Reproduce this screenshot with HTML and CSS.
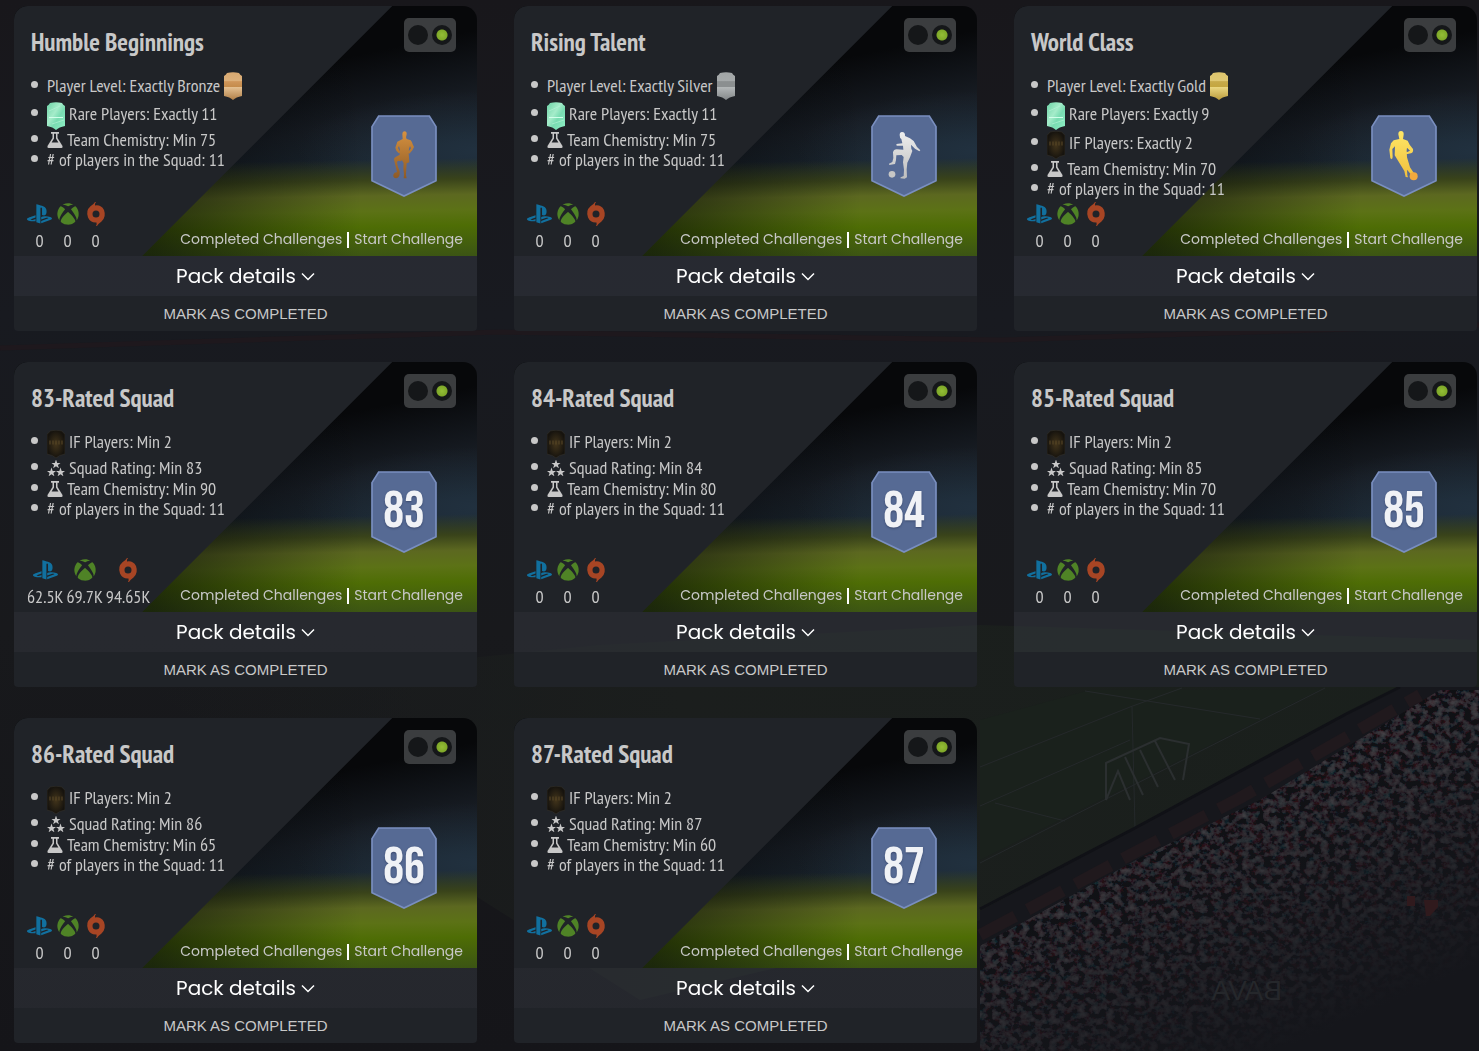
FILE: index.html
```
<!DOCTYPE html>
<html lang="en">
<head>
<meta charset="UTF-8">
<meta name="viewport" content="width=device-width, initial-scale=1">
<title>Squad Building Challenges</title>
<link rel="stylesheet" href="styles.css">
</head>
<body>

<!-- icon sprite -->
<svg class="sprite" width="0" height="0" aria-hidden="true">
    <defs>
        <linearGradient id="g-bronze" x1="0" y1="0" x2="0" y2="1"><stop offset="0" stop-color="#d8a971"/><stop offset=".3" stop-color="#dcb07a"/><stop offset=".34" stop-color="#cf965a"/><stop offset=".52" stop-color="#c58c4c"/><stop offset=".54" stop-color="#e4c091"/><stop offset="1" stop-color="#b07f48"/></linearGradient>
        <linearGradient id="g-silver" x1="0" y1="0" x2="0" y2="1"><stop offset="0" stop-color="#a1a5a6"/><stop offset=".3" stop-color="#a5a9aa"/><stop offset=".34" stop-color="#8b8f90"/><stop offset=".52" stop-color="#8b8f90"/><stop offset=".54" stop-color="#b3b7b8"/><stop offset="1" stop-color="#84888a"/></linearGradient>
        <linearGradient id="g-gold" x1="0" y1="0" x2="0" y2="1"><stop offset="0" stop-color="#ddc46c"/><stop offset=".3" stop-color="#dfc873"/><stop offset=".34" stop-color="#c7aa4a"/><stop offset=".52" stop-color="#c4a640"/><stop offset=".54" stop-color="#ead680"/><stop offset="1" stop-color="#bb9c3d"/></linearGradient>
        <linearGradient id="g-rare" x1="0" y1="0" x2="1" y2="1"><stop offset="0" stop-color="#6cd2a5"/><stop offset=".4" stop-color="#a5ecca"/><stop offset=".6" stop-color="#78dcb1"/><stop offset="1" stop-color="#8ff0c6"/></linearGradient>
        <radialGradient id="g-if"><stop offset="0" stop-color="#43351b"/><stop offset="1" stop-color="#16130e"/></radialGradient>
        <linearGradient id="g-p1" x1="0" y1="0" x2="0" y2="1"><stop offset="0" stop-color="#d6913f"/><stop offset="1" stop-color="#8d5a26"/></linearGradient>
        <linearGradient id="g-p2" x1="0" y1="0" x2="0" y2="1"><stop offset="0" stop-color="#eeeeee"/><stop offset="1" stop-color="#bdbdbd"/></linearGradient>
        <linearGradient id="g-p3" x1="0" y1="0" x2="0" y2="1"><stop offset="0" stop-color="#ffe766"/><stop offset="1" stop-color="#f0c03e"/></linearGradient>
        <path id="card-shape" d="M0 4Q2 3 3 1Q9-.6 15 1Q16 3 18 4V24Q12 25 9 28Q6 25 0 24Z"/>
    </defs>
    <symbol id="bronze" viewBox="0 0 18 28"><use href="#card-shape" fill="url(#g-bronze)"/></symbol>
    <symbol id="silver" viewBox="0 0 18 28"><use href="#card-shape" fill="url(#g-silver)"/></symbol>
    <symbol id="gold" viewBox="0 0 18 28"><use href="#card-shape" fill="url(#g-gold)"/></symbol>
    <symbol id="rare" viewBox="0 0 18 28"><use href="#card-shape" fill="url(#g-rare)"/><path d="M2 15.500H16" stroke="#d0ffea"/><path d="M2 9L13 4M5 22L17 18" stroke="#b9f5da" opacity=".6"/></symbol>
    <symbol id="if" viewBox="0 0 18 28"><use href="#card-shape" fill="url(#g-if)" stroke="#33302a" stroke-width=".6"/><path d="M2 12.500h14" stroke="#5b4927" stroke-width="4" stroke-dasharray="2 1" opacity=".5"/></symbol>
    <symbol id="flask" viewBox="0 0 16 16"><path fill="#c8c8c8" fill-rule="evenodd" d="M4 0H12V1.800H10.500V6L15.500 14Q16 16 14.500 16H1.500Q0 16 .5 14L5.500 6V1.800H4ZM7 1.800V6.500L4.600 10.500H11.400L9 6.500V1.800Z"/></symbol>
    <symbol id="stars" viewBox="0 0 18 16"><g fill="#c8c8c8"><path id="star" d="M9-.5L10.200 2.900H13.500L10.900 5L11.900 8.300L9 6.300L6.100 8.300L7.100 5L4.500 2.900H7.800Z"/><use href="#star" x="-4.500" y="8"/><use href="#star" x="4.500" y="8"/></g></symbol>
    <symbol id="ps" viewBox="0 0 576 512"><path fill="#11709f" d="M570.9 372.3c-11.3 14.2-38.8 24.3-38.8 24.3L327 470.2v-54.300l150.900-53.800c17.100-6.100 19.800-14.800 5.800-19.400-13.900-4.600-39.100-3.300-56.200 2.900L327 381.100v-56.400c23.200-7.800 47.100-13.600 75.700-16.800 40.900-4.500 90.900.6 130.200 15.500 44.200 14 49.200 34.700 38 48.900zm-224.400-92.500v-139c0-16.300-3-31.300-18.300-35.600-11.700-3.800-19 7.100-19 23.400v347.900l-93.800-29.800V32c39.900 7.400 98 24.900 129.200 35.400C424.100 94.700 451 128.700 451 205.200c0 74.500-46 102.800-104.500 74.600zM43.200 410.200c-45.400-12.800-53-39.500-32.300-54.800 19.100-14.200 51.700-24.900 51.700-24.900l134.500-47.800v54.500l-96.800 34.600c-17.100 6.100-19.700 14.800-5.800 19.400 13.900 4.600 39.100 3.300 56.200-2.900l46.400-16.900v48.800c-51.600 9.300-101.400 7.300-153.900-10z"/></symbol>
    <symbol id="xbox" viewBox="0 0 512 512"><path fill="#4f8326" d="M369.900 318.200c44.300 54.300 64.700 98.800 54.400 118.700-7.900 15.100-56.700 44.600-92.600 55.900-29.600 9.300-68.400 13.300-100.400 10.200-38.200-3.700-76.900-17.400-110.100-39C93.300 445.800 87 438.300 87 423.400c0-29.900 32.900-82.300 89.200-142.100 32-33.900 76.500-73.700 81.400-72.600 9.400 2.100 84.300 75.100 112.300 109.500zM188.600 143.800c-29.700-26.900-58.100-53.900-86.400-63.400-15.200-5.100-16.300-4.800-28.700 8.100-29.200 30.400-53.500 79.700-60.300 122.400-5.400 34.200-6.100 43.800-4.200 60.500 5.600 50.500 17.300 85.400 40.500 120.900 9.500 14.600 12.100 17.300 9.300 9.900-4.200-11-.3-37.500 9.500-64 14.300-39 53.900-112.900 120.300-194.400zm311.600 63.500C483.300 127.300 432.700 77 425.600 77c-7.300 0-24.200 6.500-36 13.900-23.300 14.500-41 31.400-64.300 52.800C367.700 197 427.500 283.100 448.200 346c6.800 20.700 9.700 41.100 7.400 52.300-1.700 8.500-1.700 8.500 1.400 4.600 6.100-7.700 19.900-31.300 25.400-43.500 7.400-16.200 15-40.200 18.600-58.700 4.300-22.500 3.900-70.800-.8-93.400zM141.300 43C189 40.500 251 77.500 255.600 78.400c.7.1 10.400-4.200 21.600-9.700 63.900-31.100 94-25.800 107.400-25.200-63.900-39.300-152.700-50-233.900-11.700-23.400 11.100-24 11.900-9.400 11.200z"/></symbol>
    <symbol id="origin" viewBox="0 0 18 24"><path fill="#a74524" fill-rule="evenodd" d="M9 0Q7.500 1.500 8 3.500Q14 2.500 17 8Q19.500 15 14.500 19.500Q11 22 10 24H9Q10 22.500 9.500 20.500Q3.500 21 1 15.500Q-1.500 8.500 3.500 4.200Q7 2 8 0ZM9 8.500A3.500 3.500 0 1 0 9 15.500A3.500 3.500 0 1 0 9 8.500Z"/></symbol>
    <symbol id="chevron" viewBox="0 0 14 9"><path fill="none" stroke="#fff" stroke-width="1.500" d="M1 1.500L7 7.500L13 1.500"/></symbol>
    <symbol id="shield" viewBox="0 0 198 246"><path fill="#566a94" stroke="#7a8fc0" stroke-width="5" d="M23 3H175L195 35V197L99 243L3 197V35Z"/></symbol>
    <symbol id="player-bronze" viewBox="0 0 198 246"><path fill="url(#g-p1)" d="M100 49Q108 49 107 58L105 67L107 72L119 76Q123 80 125 88L129 96L124 106L115 116L111 112L120 100L117 93L114 101L113 115L115 142L107 145L106 160L105 180L107 190H98L99 178L97 160L98 145L93 136L88 139L83 137L78 140L80 153L86 169Q88 188 76 190Q65 189 67 179Q70 171 78 172L76 163L70 138Q67 129 74 126L86 119L85 112L87 105L84 93L81 99L87 110L83 115L76 107L73 98L79 80L95 72L94 57Q94 49 100 49Z"/></symbol>
    <symbol id="player-silver" viewBox="0 0 198 246"><path fill="url(#g-p2)" d="M93 51Q103 51 102 63L117 70L128 78L138 96L148 106L145 109L132 101L120 89L121 101L124 108L117 127L109 143L107 163L108 187L101 191L88 190L89 187L98 183L99 164L96 142L98 126L92 120L76 121L75 135L72 147L55 150L54 146L64 141L67 129L66 112Q68 103 77 103L97 104L96 92L77 92L76 87L94 85L91 72Q86 69 86 60Q86 51 93 51Z"/><circle cx="63" cy="178" r="10" fill="#c6c6c6"/></symbol>
    <symbol id="player-gold" viewBox="0 0 198 246"><path fill="url(#g-p3)" d="M90 48Q99 48 98 59L96 72L110 77L116 89L126 102Q128 112 120 115L106 118L104 113L117 107L108 98L107 106L108 127L117 157L128 173L122 181L108 164L109 181L111 187L104 186L100 168L83 140L71 121L72 94L64 102L65 126L63 133L58 130L55 104L60 85L68 76L85 72L82 58Q82 48 90 48Z"/><circle cx="128" cy="184" r="12" fill="#f1a93d"/></symbol>
</svg>

<!-- stadium backdrop -->
<svg class="stadium" viewBox="0 0 1479 1051" preserveAspectRatio="xMidYMid slice" aria-hidden="true">
    <defs>
        <filter id="crowd" x="0" y="0" width="100%" height="100%">
            <feTurbulence type="fractalNoise" baseFrequency=".14 .16" numOctaves="3" seed="8"/>
            <feColorMatrix values=".7 .7 0 0 -.62  .35 .9 0 0 -.58  .35 .9 0 0 -.56  0 0 0 0 1"/>
            <feComposite in2="SourceGraphic" operator="in"/>
        </filter>
        <linearGradient id="sky" x1="0" y1="0" x2="0" y2="1"><stop offset="0" stop-color="#18171b"/><stop offset=".3" stop-color="#181a20"/><stop offset=".6" stop-color="#18191c"/><stop offset="1" stop-color="#151519"/></linearGradient>
        <linearGradient id="grass" x1="0" y1="0" x2="1" y2="0"><stop offset="0" stop-color="#1b1e1d" stop-opacity="0"/><stop offset=".4" stop-color="#1b1e1d"/><stop offset="1" stop-color="#1a201c"/></linearGradient>
        <linearGradient id="shade" x1="0" y1="0" x2=".6" y2="1"><stop offset="0" stop-color="#17191e" stop-opacity="0"/><stop offset="1" stop-color="#15161b"/></linearGradient>
    </defs>
    <rect width="1479" height="1051" fill="url(#sky)"/>
    <path d="M0 348L500 332L1000 340L1479 325" stroke="#1e181d" stroke-width="5" fill="none"/>
    <path d="M150 690L600 645L980 625L1479 640V690L980 920L640 1000Z" fill="url(#grass)"/>
    <path d="M980 720L1090 690H1320L980 860Z" fill="#1a211c"/>
    <g fill="none" stroke="#25292b">
        <path d="M980 767L1130 707L1182 688M980 806L1130 740M995 803L1065 821M980 863L1325 688M1085 691L1260 719M1132 707L1135 828"/>
        <path d="M1106 800V763L1160 738L1189 744L1183 780M1106 800L1118 771L1130 800M1125 757L1143 795M1140 750L1158 787M1155 741L1175 780" stroke="#2b2f30" stroke-width="2"/>
    </g>
    <path d="M980 911L1135 829L1346 715L1400 687H1479V1051H980Z" fill="#16171c"/>
    <path d="M980 909L1135 828L1346 714L1400 687" stroke="#101116" stroke-width="3" fill="none"/>
    <path d="M980 946L1140 858L1260 800L1440 690H1479V1051H980Z" filter="url(#crowd)" opacity=".5"/>
    <path d="M980 935L1130 855L1240 798L1420 695" stroke="#20191d" stroke-width="12" stroke-dasharray="40 14" fill="none"/>
    <path d="M980 946L1140 858L1260 800L1440 690H1479V1051H980Z" fill="url(#shade)"/>
    <g fill="#301a1d"><path d="M1407 896h8v10h-8zM1424 900h14v7l-8 9h-4z"/></g>
    <text x="-1282" y="1000" transform="scale(-1 1)" class="banner">BAVA</text>
</svg>

<main class="challenges">

    <article class="challenge">
        <div class="challenge-info">
            <header class="challenge-header">
                <h2>Humble Beginnings</h2>
                <span class="lights"><i></i><i class="on"></i></span>
            </header>
            <div class="challenge-body">
                <ul class="requirements">
                    <li class="level">Player Level: Exactly Bronze <svg class="card-icon"><use href="#bronze"/></svg></li>
                    <li class="rare"><svg class="card-icon"><use href="#rare"/></svg> Rare Players: Exactly 11</li>
                    <li class="chem"><svg class="flask"><use href="#flask"/></svg> Team Chemistry: Min 75</li>
                    <li># of players in the Squad: 11</li>
                </ul>
                <div class="badge"><svg><use href="#shield"/><use href="#player-bronze"/></svg></div>
            </div>
            <footer class="challenge-footer">
                <ul class="prices">
                    <li><svg class="ps"><use href="#ps"/></svg>0</li>
                    <li><svg><use href="#xbox"/></svg>0</li>
                    <li><svg><use href="#origin"/></svg>0</li>
                </ul>
                <nav class="links"><a href="#">Completed Challenges</a><a href="#">Start Challenge</a></nav>
            </footer>
        </div>
        <button class="pack-button" type="button">Pack details <svg><use href="#chevron"/></svg></button>
        <button class="mark-button" type="button">MARK AS COMPLETED</button>
    </article>

    <article class="challenge">
        <div class="challenge-info">
            <header class="challenge-header">
                <h2>Rising Talent</h2>
                <span class="lights"><i></i><i class="on"></i></span>
            </header>
            <div class="challenge-body">
                <ul class="requirements">
                    <li class="level">Player Level: Exactly Silver <svg class="card-icon"><use href="#silver"/></svg></li>
                    <li class="rare"><svg class="card-icon"><use href="#rare"/></svg> Rare Players: Exactly 11</li>
                    <li class="chem"><svg class="flask"><use href="#flask"/></svg> Team Chemistry: Min 75</li>
                    <li># of players in the Squad: 11</li>
                </ul>
                <div class="badge"><svg><use href="#shield"/><use href="#player-silver"/></svg></div>
            </div>
            <footer class="challenge-footer">
                <ul class="prices">
                    <li><svg class="ps"><use href="#ps"/></svg>0</li>
                    <li><svg><use href="#xbox"/></svg>0</li>
                    <li><svg><use href="#origin"/></svg>0</li>
                </ul>
                <nav class="links"><a href="#">Completed Challenges</a><a href="#">Start Challenge</a></nav>
            </footer>
        </div>
        <button class="pack-button" type="button">Pack details <svg><use href="#chevron"/></svg></button>
        <button class="mark-button" type="button">MARK AS COMPLETED</button>
    </article>

    <article class="challenge">
        <div class="challenge-info">
            <header class="challenge-header">
                <h2>World Class</h2>
                <span class="lights"><i></i><i class="on"></i></span>
            </header>
            <div class="challenge-body">
                <ul class="requirements">
                    <li class="level">Player Level: Exactly Gold <svg class="card-icon"><use href="#gold"/></svg></li>
                    <li class="rare"><svg class="card-icon"><use href="#rare"/></svg> Rare Players: Exactly 9</li>
                    <li class="rare"><svg class="card-icon"><use href="#if"/></svg> IF Players: Exactly 2</li>
                    <li class="chem"><svg class="flask"><use href="#flask"/></svg> Team Chemistry: Min 70</li>
                    <li># of players in the Squad: 11</li>
                </ul>
                <div class="badge"><svg><use href="#shield"/><use href="#player-gold"/></svg></div>
            </div>
            <footer class="challenge-footer">
                <ul class="prices">
                    <li><svg class="ps"><use href="#ps"/></svg>0</li>
                    <li><svg><use href="#xbox"/></svg>0</li>
                    <li><svg><use href="#origin"/></svg>0</li>
                </ul>
                <nav class="links"><a href="#">Completed Challenges</a><a href="#">Start Challenge</a></nav>
            </footer>
        </div>
        <button class="pack-button" type="button">Pack details <svg><use href="#chevron"/></svg></button>
        <button class="mark-button" type="button">MARK AS COMPLETED</button>
    </article>

    <article class="challenge">
        <div class="challenge-info">
            <header class="challenge-header">
                <h2>83-Rated Squad</h2>
                <span class="lights"><i></i><i class="on"></i></span>
            </header>
            <div class="challenge-body">
                <ul class="requirements">
                    <li class="rare"><svg class="card-icon"><use href="#if"/></svg> IF Players: Min 2</li>
                    <li class="chem"><svg class="stars"><use href="#stars"/></svg> Squad Rating: Min 83</li>
                    <li class="chem"><svg class="flask"><use href="#flask"/></svg> Team Chemistry: Min 90</li>
                    <li># of players in the Squad: 11</li>
                </ul>
                <div class="badge"><svg><use href="#shield"/></svg><b>83</b></div>
            </div>
            <footer class="challenge-footer">
                <ul class="prices">
                    <li><svg class="ps"><use href="#ps"/></svg>62.5K</li>
                    <li><svg><use href="#xbox"/></svg>69.7K</li>
                    <li><svg><use href="#origin"/></svg>94.65K</li>
                </ul>
                <nav class="links"><a href="#">Completed Challenges</a><a href="#">Start Challenge</a></nav>
            </footer>
        </div>
        <button class="pack-button" type="button">Pack details <svg><use href="#chevron"/></svg></button>
        <button class="mark-button" type="button">MARK AS COMPLETED</button>
    </article>

    <article class="challenge">
        <div class="challenge-info">
            <header class="challenge-header">
                <h2>84-Rated Squad</h2>
                <span class="lights"><i></i><i class="on"></i></span>
            </header>
            <div class="challenge-body">
                <ul class="requirements">
                    <li class="rare"><svg class="card-icon"><use href="#if"/></svg> IF Players: Min 2</li>
                    <li class="chem"><svg class="stars"><use href="#stars"/></svg> Squad Rating: Min 84</li>
                    <li class="chem"><svg class="flask"><use href="#flask"/></svg> Team Chemistry: Min 80</li>
                    <li># of players in the Squad: 11</li>
                </ul>
                <div class="badge"><svg><use href="#shield"/></svg><b>84</b></div>
            </div>
            <footer class="challenge-footer">
                <ul class="prices">
                    <li><svg class="ps"><use href="#ps"/></svg>0</li>
                    <li><svg><use href="#xbox"/></svg>0</li>
                    <li><svg><use href="#origin"/></svg>0</li>
                </ul>
                <nav class="links"><a href="#">Completed Challenges</a><a href="#">Start Challenge</a></nav>
            </footer>
        </div>
        <button class="pack-button" type="button">Pack details <svg><use href="#chevron"/></svg></button>
        <button class="mark-button" type="button">MARK AS COMPLETED</button>
    </article>

    <article class="challenge">
        <div class="challenge-info">
            <header class="challenge-header">
                <h2>85-Rated Squad</h2>
                <span class="lights"><i></i><i class="on"></i></span>
            </header>
            <div class="challenge-body">
                <ul class="requirements">
                    <li class="rare"><svg class="card-icon"><use href="#if"/></svg> IF Players: Min 2</li>
                    <li class="chem"><svg class="stars"><use href="#stars"/></svg> Squad Rating: Min 85</li>
                    <li class="chem"><svg class="flask"><use href="#flask"/></svg> Team Chemistry: Min 70</li>
                    <li># of players in the Squad: 11</li>
                </ul>
                <div class="badge"><svg><use href="#shield"/></svg><b>85</b></div>
            </div>
            <footer class="challenge-footer">
                <ul class="prices">
                    <li><svg class="ps"><use href="#ps"/></svg>0</li>
                    <li><svg><use href="#xbox"/></svg>0</li>
                    <li><svg><use href="#origin"/></svg>0</li>
                </ul>
                <nav class="links"><a href="#">Completed Challenges</a><a href="#">Start Challenge</a></nav>
            </footer>
        </div>
        <button class="pack-button" type="button">Pack details <svg><use href="#chevron"/></svg></button>
        <button class="mark-button" type="button">MARK AS COMPLETED</button>
    </article>

    <article class="challenge">
        <div class="challenge-info">
            <header class="challenge-header">
                <h2>86-Rated Squad</h2>
                <span class="lights"><i></i><i class="on"></i></span>
            </header>
            <div class="challenge-body">
                <ul class="requirements">
                    <li class="rare"><svg class="card-icon"><use href="#if"/></svg> IF Players: Min 2</li>
                    <li class="chem"><svg class="stars"><use href="#stars"/></svg> Squad Rating: Min 86</li>
                    <li class="chem"><svg class="flask"><use href="#flask"/></svg> Team Chemistry: Min 65</li>
                    <li># of players in the Squad: 11</li>
                </ul>
                <div class="badge"><svg><use href="#shield"/></svg><b>86</b></div>
            </div>
            <footer class="challenge-footer">
                <ul class="prices">
                    <li><svg class="ps"><use href="#ps"/></svg>0</li>
                    <li><svg><use href="#xbox"/></svg>0</li>
                    <li><svg><use href="#origin"/></svg>0</li>
                </ul>
                <nav class="links"><a href="#">Completed Challenges</a><a href="#">Start Challenge</a></nav>
            </footer>
        </div>
        <button class="pack-button" type="button">Pack details <svg><use href="#chevron"/></svg></button>
        <button class="mark-button" type="button">MARK AS COMPLETED</button>
    </article>

    <article class="challenge">
        <div class="challenge-info">
            <header class="challenge-header">
                <h2>87-Rated Squad</h2>
                <span class="lights"><i></i><i class="on"></i></span>
            </header>
            <div class="challenge-body">
                <ul class="requirements">
                    <li class="rare"><svg class="card-icon"><use href="#if"/></svg> IF Players: Min 2</li>
                    <li class="chem"><svg class="stars"><use href="#stars"/></svg> Squad Rating: Min 87</li>
                    <li class="chem"><svg class="flask"><use href="#flask"/></svg> Team Chemistry: Min 60</li>
                    <li># of players in the Squad: 11</li>
                </ul>
                <div class="badge"><svg><use href="#shield"/></svg><b>87</b></div>
            </div>
            <footer class="challenge-footer">
                <ul class="prices">
                    <li><svg class="ps"><use href="#ps"/></svg>0</li>
                    <li><svg><use href="#xbox"/></svg>0</li>
                    <li><svg><use href="#origin"/></svg>0</li>
                </ul>
                <nav class="links"><a href="#">Completed Challenges</a><a href="#">Start Challenge</a></nav>
            </footer>
        </div>
        <button class="pack-button" type="button">Pack details <svg><use href="#chevron"/></svg></button>
        <button class="mark-button" type="button">MARK AS COMPLETED</button>
    </article>

</main>

</body>
</html>
```
FILE: styles.css
```
* {
    box-sizing: border-box;
}

body {
    margin: 0;
    background-color: #16161a;
    color: #c8c8c8;
    font-family: "PT Sans Narrow", "Liberation Sans Narrow", "Liberation Sans", sans-serif;
    font-size: 18px;
}

ul {
    list-style: none;
    margin: 0;
    padding: 0;
}

.sprite {
    position: absolute;
}

.stadium {
    position: fixed;
    top: 0;
    left: 0;
    width: 100%;
    height: 100%;
    z-index: -1;
}

.banner {
    fill: #25272b;
    font-family: "Liberation Sans Narrow", "Liberation Sans", sans-serif;
    font-size: 28px;
}

.challenges {
    display: grid;
    grid-template-columns: repeat(auto-fill, minmax(420px, 1fr));
    gap: 31px 37px;
    padding: 6px 2px 8px 14px;
}

.challenge {
    display: flex;
    flex-direction: column;
    border-radius: 14px 14px 4px 4px;
    overflow: hidden;
}

/* dark panel cut diagonally over the floodlit pitch */
.challenge-info {
    display: flex;
    flex-direction: column;
    min-height: 250px;
    background:
        linear-gradient(135deg, #202328 267px, transparent 268px),
        linear-gradient(to right, rgba(4, 6, 8, 0.6) 30%, transparent 75%),
        linear-gradient(179deg, transparent 62%, #39431a 70%, #5c6820 76%, #5c7216 82%, #4e6d05 88%, #3b5414 100%),
        radial-gradient(ellipse 180px 60px at 100% 58%, rgba(40, 60, 80, 0.5), transparent),
        linear-gradient(168deg, #07080a 35%, #171c23 54%, #1a252e 66%);
}

.challenge-header {
    display: flex;
    justify-content: space-between;
    align-items: flex-start;
    height: 66px;
    padding: 12px 21px 0 17px;
}

.challenge-header h2 {
    margin: 10px 0 0;
    font-size: 25px;
    line-height: 28px;
    font-weight: bold;
}

.lights {
    display: flex;
    align-items: center;
    justify-content: space-between;
    width: 52px;
    height: 34px;
    padding: 0 4px;
    border-radius: 5px;
    background-color: #3b3d3f;
}

.lights i {
    width: 20px;
    height: 20px;
    border-radius: 50%;
    background-color: #151719;
}

.lights .on {
    background-image: radial-gradient(circle at center, #93bd36 0, #7fa829 5px, transparent 6px);
}

.challenge-body {
    display: flex;
    justify-content: space-between;
    align-items: flex-start;
    padding: 0 40px 0 17px;
}

.requirements li {
    display: flex;
    align-items: center;
    gap: 4px;
    height: 20px;
    line-height: 22px;
    padding-bottom: 1px;
    white-space: nowrap;
}

.requirements li:before {
    content: '';
    width: 7px;
    height: 7px;
    margin: 0 5px 3px 0;
    border-radius: 50%;
    background-color: #c8c8c8;
}

.requirements .level {
    height: 28px;
}

.requirements .rare {
    height: 29px;
}

.requirements .chem {
    height: 21px;
    padding-bottom: 0;
}

.card-icon {
    width: 18px;
    height: 28px;
}

.rare .card-icon {
    margin-top: 3px;
}

.flask {
    width: 16px;
    height: 16px;
}

.stars {
    width: 18px;
    height: 16px;
}

.badge {
    display: grid;
    place-items: center;
    margin-top: 43px;
    height: 82px;
}

.badge svg,
.badge b {
    grid-area: 1 / 1;
}

.badge svg {
    width: 66px;
    height: 82px;
}

.badge b {
    color: #f0f2f6;
    font-family: "Bebas Neue", "PT Sans Narrow", "Liberation Sans Narrow", sans-serif;
    font-size: 52px;
    font-weight: normal;
    line-height: 80px;
    text-shadow: 0 1px 2px rgba(30, 40, 70, 0.5);
}

.challenge-footer {
    display: flex;
    justify-content: space-between;
    align-items: flex-end;
    margin-top: auto;
    padding: 0 14px 4px 13px;
}

.prices {
    display: flex;
    gap: 3px;
}

.prices li {
    display: flex;
    flex-direction: column;
    align-items: center;
    min-width: 25px;
    line-height: 22px;
}

.prices svg {
    width: 22px;
    height: 24px;
    margin-bottom: 4px;
}

.prices .ps {
    width: 25px;
}

.links {
    display: flex;
    align-items: center;
    font-family: Poppins, Lato, sans-serif;
    font-size: 14px;
    line-height: 25px;
}

.links a {
    color: #c8c8c8;
    text-decoration: none;
}

.links a + a:before {
    content: '';
    display: inline-block;
    width: 2px;
    height: 16px;
    margin: 0 5px;
    vertical-align: middle;
    background-color: #fff;
}

.links a:hover {
    color: #fff;
}

.pack-button,
.mark-button {
    border: 0;
    cursor: pointer;
}

.pack-button {
    display: flex;
    justify-content: center;
    align-items: center;
    gap: 5px;
    height: 40px;
    background-color: rgba(57, 61, 72, 0.45);
    color: #fff;
    font-family: Poppins, Lato, sans-serif;
    font-size: 20px;
}

.pack-button svg {
    width: 14px;
    height: 9px;
}

.mark-button {
    height: 35px;
    padding: 0 0 1px;
    background-color: #202328;
    color: #c8c8c8;
    font-family: "Liberation Sans", Arial, sans-serif;
    font-size: 15px;
}
```
